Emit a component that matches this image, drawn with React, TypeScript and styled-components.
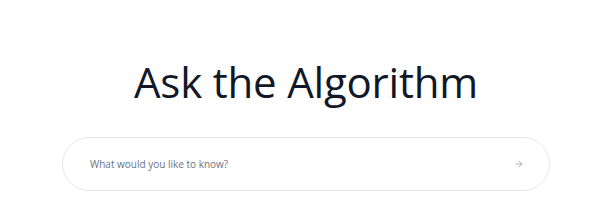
import React from "react";
import styled, { createGlobalStyle } from "styled-components";

const Global = createGlobalStyle`
  html, body { margin: 0; padding: 0; background: #ffffff; }
  body { font-family: "Open Sans", "Noto Sans", sans-serif; }
`;

const Page = styled.main`
  width: 600px;
  height: 200px;
  display: flex;
  flex-direction: column;
  align-items: center;
  padding-top: 54px;
  box-sizing: border-box;
`;

const Title = styled.h1`
  margin: 0;
  font-family: "Open Sans", sans-serif;
  font-weight: 400;
  font-size: 42px;
  line-height: 56px;
  color: #111827;
  letter-spacing: -0.2px;
  transform: translateX(6px);
`;

const SearchBar = styled.form`
  margin-top: 27px;
  margin-left: 12px;
  width: 488px;
  height: 54px;
  box-sizing: border-box;
  border: 1px solid #e5e7eb;
  border-radius: 27px;
  display: flex;
  align-items: center;
  padding: 0 23px 0 25px;
  background: #fff;
`;

const Input = styled.input`
  flex: 1;
  border: none;
  outline: none;
  background: transparent;
  font-family: "Open Sans", sans-serif;
  font-size: 10px;
  color: #374151;
  &::placeholder { color: #6b7280; }
`;

const Submit = styled.button`
  border: none;
  background: transparent;
  padding: 0;
  width: 14px;
  height: 14px;
  display: flex;
  align-items: center;
  justify-content: center;
  color: #9ca3af;
`;

export default function App() {
  return (
    <>
      <Global />
      <Page>
        <Title>Ask the Algorithm</Title>
        <SearchBar onSubmit={(e) => e.preventDefault()}>
          <Input placeholder="What would you like to know?" />
          <Submit type="submit" aria-label="Submit">
            <svg width="10" height="10" viewBox="0 0 24 24" fill="none" stroke="currentColor" strokeWidth="2" strokeLinecap="round" strokeLinejoin="round">
              <path d="M5 12h14" />
              <path d="m12 5 7 7-7 7" />
            </svg>
          </Submit>
        </SearchBar>
      </Page>
    </>
  );
}
